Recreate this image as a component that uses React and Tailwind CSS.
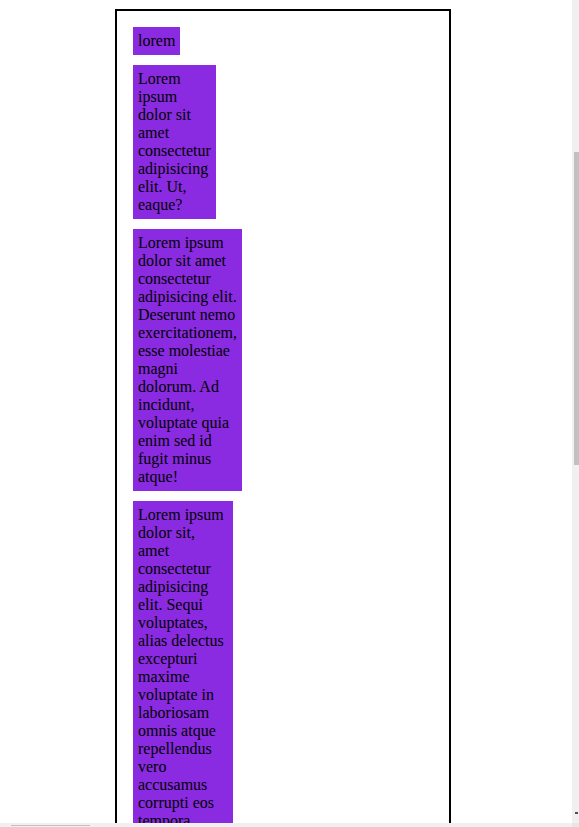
import React from "react";

const items = [
  { text: "lorem" },
  { text: "Lorem ipsum dolor sit amet consectetur adipisicing elit. Ut, eaque?" },
  {
    text: "Lorem ipsum dolor sit amet consectetur adipisicing elit. Deserunt nemo exercitationem, esse molestiae magni dolorum. Ad incidunt, voluptate quia enim sed id fugit minus atque!",
  },
  {
    text: "Lorem ipsum dolor sit, amet consectetur adipisicing elit. Sequi voluptates, alias delectus excepturi maxime voluptate in laboriosam omnis atque repellendus vero accusamus corrupti eos tempora necessitatibus quae dolores.",
    width: "w-[100px]",
  },
];

const Item = ({ text, width = "w-min" }) => (
  <div className={`${width} p-[5px] bg-[#8a2be2] text-black`}>{text}</div>
);

// fake page scrollbars from the screenshot
const Scrollbars = () => (
  <>
    <div className="fixed top-0 right-0 w-[7px] h-full bg-[#f0f0f0]">
      <div className="ml-[2px] mt-[152px] w-[5px] h-[313px] bg-[#c1c1c1]" />
    </div>
    <div className="fixed bottom-0 left-0 w-[572px] h-[4px] bg-[#f0f0f0]">
      <div className="ml-[11px] mt-[2px] w-[79px] h-[1px] bg-[#c1c1c1]" />
    </div>
    <div className="fixed bottom-0 right-0 w-[7px] h-[4px] bg-[#e6e6e6]" />
    <div className="fixed right-[1px] bottom-[13px] w-[3px] h-[2px] bg-[#505050]" />
  </>
);

export default function App() {
  return (
    <div className="min-h-screen bg-white font-['Liberation_Serif','Times_New_Roman',serif] text-[16px] leading-[18px]">
      <div className="ml-[115px] pt-[9px]">
        <div className="w-[336px] border-2 border-black p-4 pb-6 flex flex-col items-start gap-[10px]">
          {items.map((it, i) => (
            <Item key={i} text={it.text} width={it.width} />
          ))}
        </div>
      </div>
      <Scrollbars />
    </div>
  );
}
